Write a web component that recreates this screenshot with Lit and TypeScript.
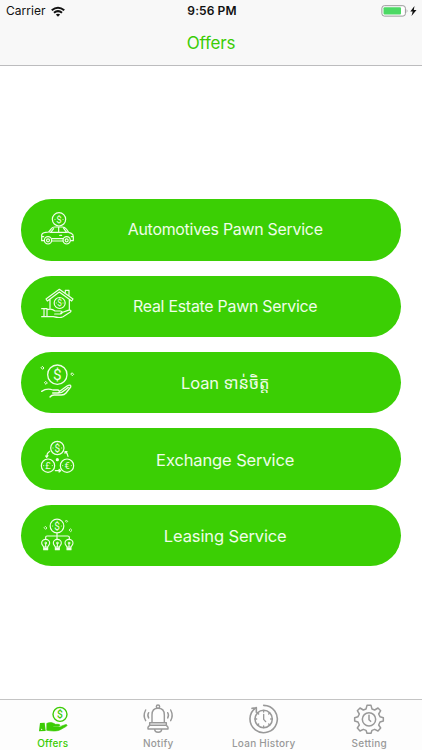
import { LitElement, html, css, svg } from "lit";
import { customElement, property } from "lit/decorators.js";

const coin = (x: number, y: number, r: number, s: string, size: number, w = 3.6) => svg`
  <circle cx=${x} cy=${y} r=${r} stroke-width=${w}></circle>
  <text x=${x} y=${y + size * 0.36} font-size=${size} class="sym">${s}</text>`;

const sideDots = (x: number, y: number, d: number) => svg`
  <path d="M${x - d} ${y}v.1M${x + d} ${y}v.1" stroke-width="3"></path>`;

const bulb = (x: number) => svg`
  <path d="M${x - 6} 108c-1-4-6-6-6-12a12 11 0 0 1 24 0c0 6-5 8-6 12zM${x - 6} 108v8h12v-8M${x - 5} 112h10M${x} 98v9" stroke-width="3.3"></path>
  <circle cx=${x} cy="96" r="2.500" stroke-width="3"></circle>`;

const art: Record<string, unknown> = {
  car: svg`${coin(87, 43, 20, "$", 29)}${sideDots(87, 43, 12)}
    <path d="M43 107h-8V91c0-6 4-8 12-9l9-1 9-11c2-3 5-4 9-4h23c6 0 9 2 12 6l7 10 8 3c5 2 6 5 6 10v12h-8M65 101h34M65 108h34M60 82h52M86 67v15M62 82l9-11M110 82l-9-12M35 95h6M124 95h6M89 91h6"></path>
    <circle cx="54" cy="106" r="11"></circle><circle cx="54" cy="106" r="4.500"></circle>
    <circle cx="110" cy="106" r="11"></circle><circle cx="110" cy="106" r="4.500"></circle>`,
  house: svg`${coin(89, 66, 16.5, "$", 25)}${sideDots(89, 66, 10)}
    <path d="M60 82V55M118 55v32M52 60l-4-6 40-29 41 29-4 6-37-27zM106 34v-6h11v16"></path>
    <path d="M35 83h16v24H35M42 83v24M51 86c9-3 17-2 24 4h16c7 0 7 8 0 9H74M92 96l22-8c8-3 12 2 6 6l-21 13c-9 5-17 3-29 0H51"></path>`,
  hand: svg`${coin(82, 50, 29, "$", 46, 4)}
    <path d="M35 100c14-10 24-8 34-4h14c8 1 6 9-1 9H68M89 100l22-16c7-4 13-3 11 3l-14 18c-4 5-8 6-14 6H72c-5 0-9 2-12 6M85 105c8 0 14-3 20-9l10-8" stroke-width="4"></path>
    <g stroke-width="3"><path d="M38 26l4 4-4 4-4-4zM127 45l4 4-4 4-4-4zM48 71l4 4-4 4-4-4z"></path></g>`,
  exchange: svg`${coin(82, 42, 20, "$", 30)}${sideDots(82, 42, 13)}${coin(54, 95, 20, "£", 28)}${sideDots(54, 95, 13)}${coin(111, 95, 20, "€", 28)}${sideDots(111, 95, 13)}
    <path d="M50 66c1-6 4-11 9-14M47 66l3 4 4-5M108 54c3 3 5 8 6 13M105 58v-5h6M76 110h13M87 106l5 4-5 4" stroke-width="3.600"></path>
    <circle cx="82" cy="77" r="3" fill="currentColor"></circle>`,
  lease: svg`${coin(81, 45, 20.5, "$", 30)}${sideDots(81, 45, 13)}
    <path d="M81 66v19M47 85v-6q0-4 4-4h62q5 0 5 4v6"></path>
    ${bulb(47)}${bulb(82)}${bulb(117)}
    <path d="M47 47l4 4-4 4-4-4zM110 28l3 3-3 3-3-3zM122 54l4 4-4 4-4-4z" stroke-width="2.500"></path>`,
  offers: svg`${coin(180, 59, 21, "$", 31, 4.2)}
    <path d="M120 85l14-1 3 25-20 1z" fill="currentColor" stroke="none"></path>
    <path d="M141 86c9-4 18-2 25 3h9c6 0 6 6 0 6h-15v2h17c4 0 5-1 8-3l11-4c5-1 7 2 3 5l-18 10c-12 6-25 4-40 2z" fill="currentColor" stroke="currentColor" stroke-width="2"></path>
    <circle cx="125" cy="104" r="2" fill="#fff" stroke="none"></circle>`,
  notify: svg`<g stroke-width="4.300"><circle cx="475" cy="36" r="5"></circle>
    <path d="M457 84V61c0-13 7-20 18-20s19 7 19 20v23M450 84h50v8h-50zM450 92l-5 6v5h60v-5l-5-6M465 103c0 13 21 13 21 0"></path>
    <path d="M447 54q-5 8 0 16M438 46q-9 17 0 32M504 54q5 8 0 16M513 46q9 17 0 32"></path></g>`,
  history: svg`<path d="M369 32a41 41 0 1 1-23 7M334 41l13-2v14" stroke-width="4.800"></path>
    <circle cx="369" cy="73" r="26" stroke-width="4.500"></circle>
    <path d="M369 59v15l6 7M369 47v5M369 94v5M343 73h5M390 73h5M351 55l3 3M387 55l-3 3M351 91l3-3M387 91l-3-3" stroke-width="4"></path>`,
  setting: svg`<g stroke-width="4.500"><path d="M469 32h12l3 11 8 3 10-6 8 8-6 10 4 8 10 3v10l-10 3-4 9 6 9-8 9-10-5-8 3-3 9h-12l-3-9-8-3-10 5-8-9 6-9-4-9-10-3V69l10-3 4-8-6-10 8-8 10 6 8-3z"></path>
    <circle cx="475" cy="74" r="20"></circle><path d="M475 62v13l5 5"></path></g>`,
};

@customElement("line-icon")
class LineIcon extends LitElement {
  @property() name = "car";
  @property() box = "0 0 180 150";
  static styles = css`
    :host { display: block; }
    svg { display: block; width: 100%; height: 100%; overflow: visible; fill: none; stroke: currentColor; stroke-width: 3.6; stroke-linecap: round; stroke-linejoin: round; }
    .sym { fill: currentColor; stroke: none; text-anchor: middle; font-family: Roboto, sans-serif; }
  `;
  render() {
    return html`<svg viewBox=${this.box}>${art[this.name]}</svg>`;
  }
}

const services = [
  { icon: "car", label: "Automotives Pawn Service", cls: "long" },
  { icon: "house", label: "Real Estate Pawn Service", cls: "long" },
  { icon: "hand", label: "Loan ទាន់ចិត្ត", cls: "" },
  { icon: "exchange", label: "Exchange Service", cls: "" },
  { icon: "lease", label: "Leasing Service", cls: "" },
];

const tabs = [
  { icon: "offers", label: "Offers", box: "114 28 90 90" },
  { icon: "notify", label: "Notify", box: "430 28 90 90" },
  { icon: "history", label: "Loan History", box: "325 28 90 90" },
  { icon: "setting", label: "Setting", box: "430 28 90 90" },
];

@customElement("app-root")
class AppRoot extends LitElement {
  static styles = css`
    :host { display: flex; flex-direction: column; width: 422px; height: 750px; overflow: hidden; background: #fff; font-family: Inter, "Noto Sans Khmer", "Khmer OS", sans-serif; }
    header { box-sizing: border-box; height: 66px; background: #f8f8f8; border-bottom: 1px solid #bcbcbe; }
    .status { display: grid; grid-template-columns: 1fr auto 1fr; align-items: center; height: 22px; padding: 0 5px 0 6px; font-size: 12px; line-height: 22px; color: #111; }
    .left { display: flex; align-items: center; gap: 5px; letter-spacing: 0.05px; }
    .wifi { width: 14px; height: 11px; }
    .time { font-weight: 600; font-size: 12px; letter-spacing: 0.1px; padding-left: 1px; }
    .right { display: flex; justify-content: flex-end; }
    .battery { width: 36px; height: 12px; }
    .title { height: 43px; line-height: 43px; text-align: center; color: #3bcc05; font-size: 17px; letter-spacing: -0.2px; }
    main { flex: 1; display: flex; flex-direction: column; gap: 15px; padding: 133.3px 20.6px 0; }
    .pill { box-sizing: border-box; display: flex; align-items: center; height: 61.4px; flex: none; border-radius: 30.7px; background: #3bcf04; color: #effde9; padding-left: 9.4px; }
    .pill line-icon { width: 60px; height: 50px; flex: none; }
    .label { flex: 1; text-align: center; font-size: 16.5px; letter-spacing: -0.12px; white-space: nowrap; padding-right: 41px; padding-top: 1px; line-height: 24px; }
    .long { font-size: 15.9px; letter-spacing: -0.25px; }
    nav { box-sizing: border-box; height: 51px; display: grid; grid-template-columns: repeat(4, 1fr); border-top: 1px solid #c4c4c4; background: #fdfdfd; }
    .tab { display: flex; flex-direction: column; align-items: center; color: #999; font-size: 10px; font-weight: 500; letter-spacing: 0.25px; padding-top: 4px; }
    .tab line-icon { width: 30px; height: 30px; }
    .tab span { line-height: 14px; margin-top: 2px; }
    .active { color: #3bcc05; }
  `;
  render() {
    return html`
      <header>
        <div class="status">
          <div class="left">Carrier
            <svg class="wifi" viewBox="0 0 15 11" fill="none" stroke="#111" stroke-width="2.200">
              <path d="M.8 4.200q6.700-5.500 13.400 0M3.200 6.900q4.300-3.500 8.600 0"></path>
              <path d="M5.200 8.700q2.300-1.800 4.600 0l-2.300 2.300z" fill="#111" stroke="none"></path>
            </svg>
          </div>
          <div class="time">9:56 PM</div>
          <div class="right">
            <svg class="battery" viewBox="0 0 36 12">
              <rect x=".9" y=".7" width="23.500" height="10.400" rx="2.500" fill="#fff" stroke="#999"></rect>
              <rect x="2.500" y="2.300" width="17.500" height="7.200" rx="1" fill="#4cd964"></rect>
              <path d="M25.700 4q1.600 2 0 4z" fill="#999"></path>
              <path d="M33.500 1l-4.200 5.500h2.400l-1.200 4.500 5-6h-2.700z" fill="#111"></path>
            </svg>
          </div>
        </div>
        <div class="title">Offers</div>
      </header>
      <main>
        ${services.map((s) => html`<div class="pill"><line-icon name=${s.icon}></line-icon><div class="label ${s.cls}">${s.label}</div></div>`)}
      </main>
      <nav>
        ${tabs.map((t, i) => html`<div class="tab ${i === 0 ? "active" : ""}"><line-icon name=${t.icon} box=${t.box}></line-icon><span>${t.label}</span></div>`)}
      </nav>`;
  }
}
